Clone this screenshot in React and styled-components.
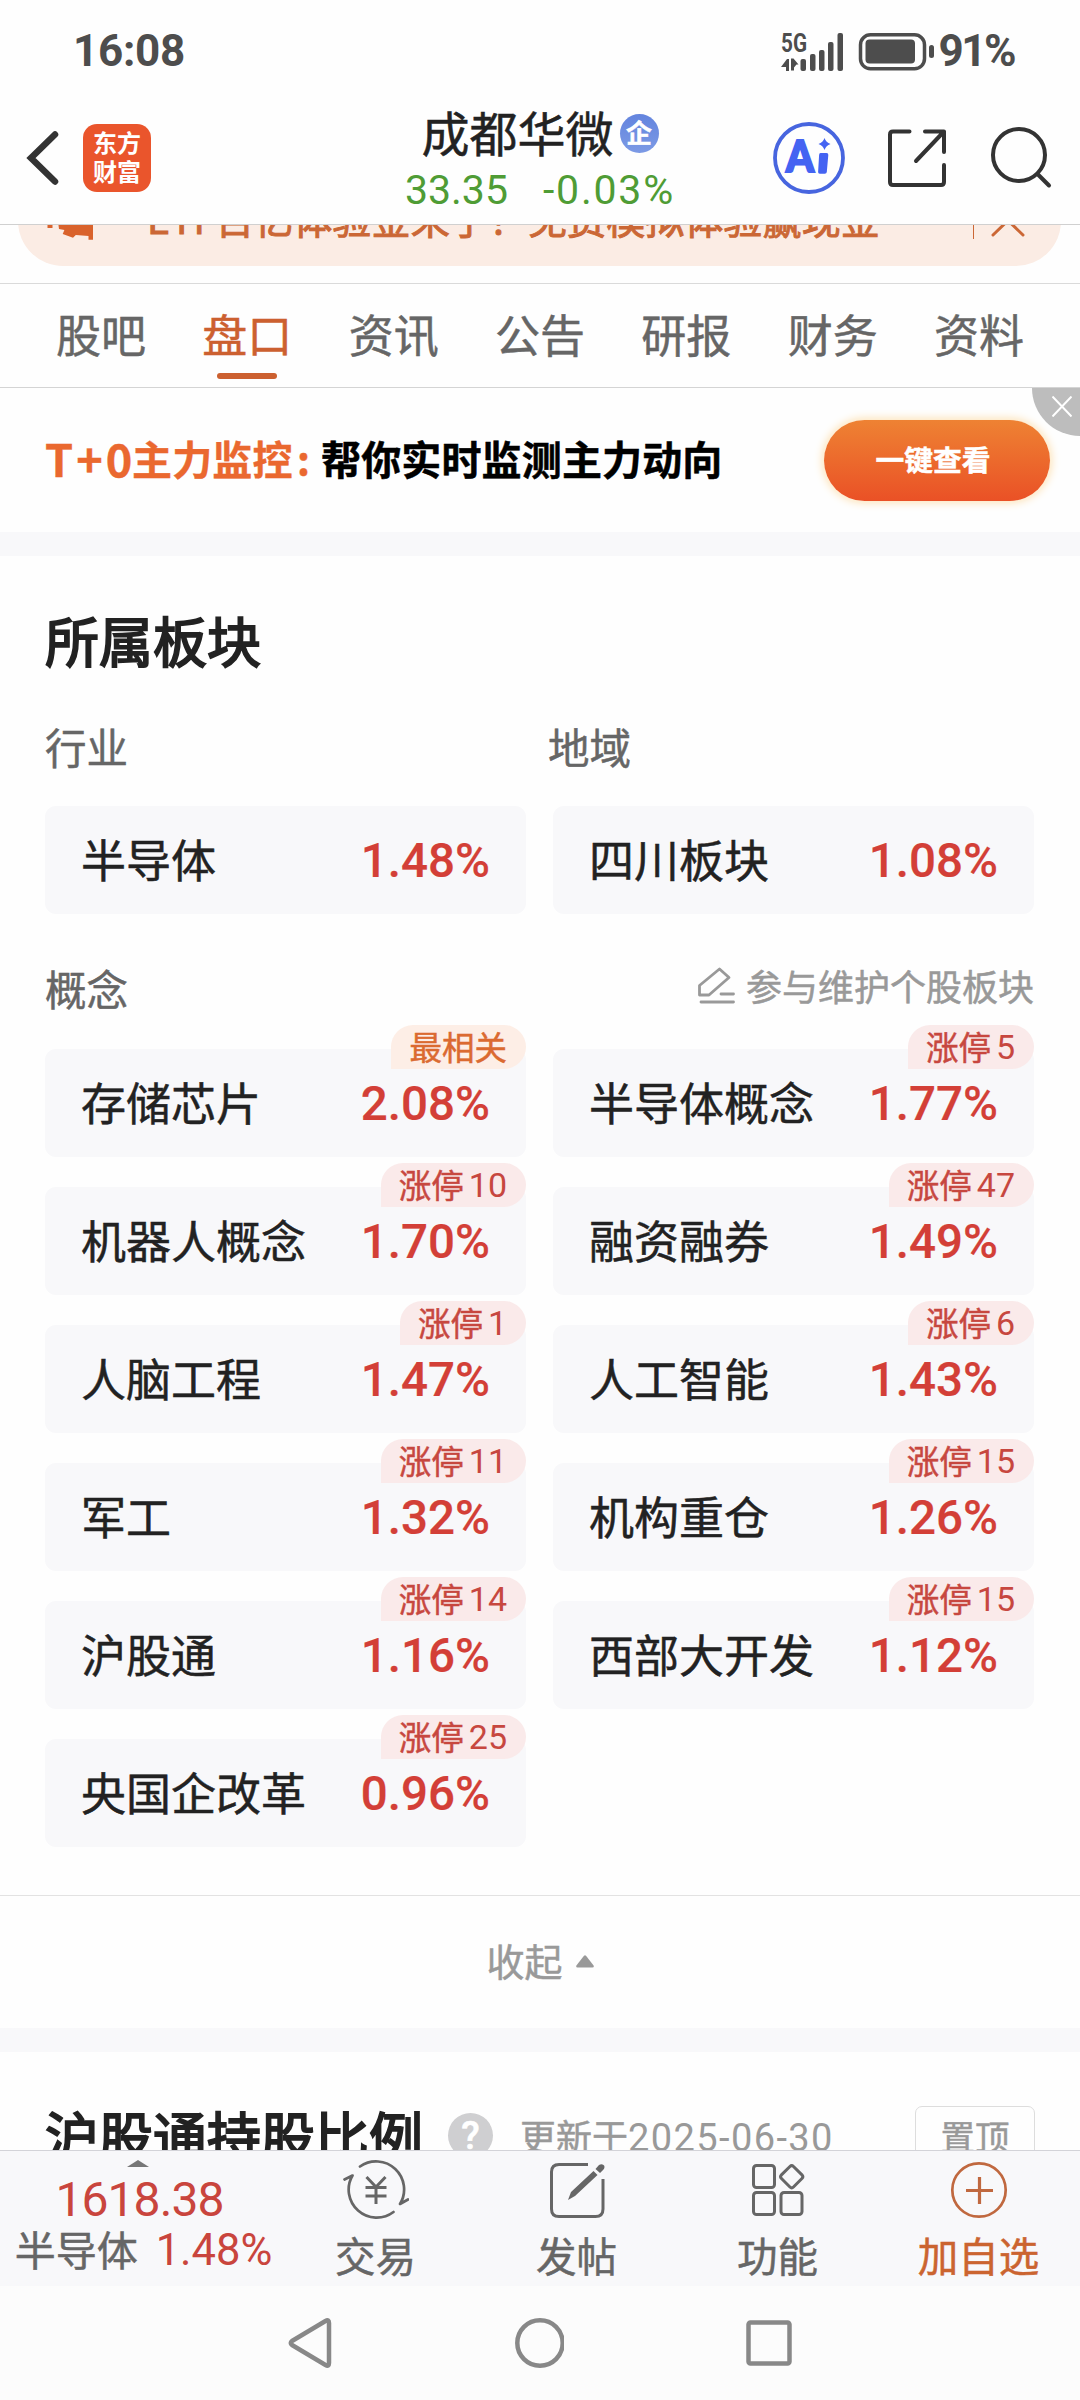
import React from "react";
import styled, { createGlobalStyle } from "styled-components";

const GlobalStyle = createGlobalStyle`
  * {
    box-sizing: border-box;
  }

  body {
    margin: 0;
    background-color: #fefefe;
    font-family: "Noto Sans CJK SC", sans-serif;
    color: #222222;
    -webkit-text-stroke-width: 0.5px;
  }

  svg {
    display: block;
    flex-shrink: 0;
    -webkit-text-stroke-width: 0;
  }
`;

const Screen = styled.div`
  width: 1080px;
  height: 2400px;
  display: flex;
  flex-direction: column;
  overflow: hidden;
  white-space: nowrap;
`;

const Num = styled.span`
  font-family: Roboto, sans-serif;
  font-size: ${({ size }) => size}px;
  font-weight: ${({ weight }) => weight || 400};
  letter-spacing: ${({ spacing }) => spacing || 0}px;
  -webkit-text-stroke-width: 0;
`;

/* ---------- status bar ---------- */

const StatusBar = styled.div`
  height: 102px;
  padding: 0 66px 0 73px;
  display: flex;
  align-items: center;
  justify-content: space-between;
  color: #4d4d4d;
`;

const StatusIcons = styled.div`
  display: flex;
  align-items: center;
  gap: 4px;
`;

/* ---------- app bar ---------- */

const AppBar = styled.div`
  height: 123px;
  display: grid;
  grid-template-columns: 1fr auto 1fr;
  border-bottom: 1px solid #d0d0d0;
`;

const AppBarLeft = styled.div`
  height: 111px;
  padding-left: 24px;
  display: flex;
  align-items: center;
  gap: 21px;
`;

const AppBarRight = styled.div`
  height: 111px;
  padding-right: 28px;
  display: flex;
  align-items: center;
  justify-content: flex-end;
  gap: 41px;
`;

const Logo = styled.div`
  width: 68px;
  height: 68px;
  border-radius: 14px;
  background-color: #ea552c;
  color: #ffffff;
  font-size: 24px;
  font-weight: 700;
  line-height: 29px;
  text-align: center;
  padding-top: 3px;
  -webkit-text-stroke-width: 0;
`;

const Stock = styled.div`
  display: flex;
  flex-direction: column;
  align-items: center;
`;

const StockName = styled.div`
  height: 57px;
  display: flex;
  align-items: center;
  gap: 6px;
  font-size: 48px;
  line-height: 57px;
  padding-top: 1px;
`;

const Verified = styled.span`
  width: 39px;
  height: 39px;
  margin-top: 5px;
  border-radius: 50%;
  background: linear-gradient(#6384de, #7c9ae5);
  color: #ffffff;
  font-size: 26px;
  font-weight: 700;
  line-height: 36px;
  text-align: center;
`;

const StockPrice = styled.div`
  display: flex;
  gap: 35px;
  line-height: 62px;
  color: #4f9c35;
`;

/* ---------- notice ---------- */

const NoticeArea = styled.div`
  height: 58px;
  padding: 0 19px 17px 18px;
  display: flex;
  align-items: flex-end;
  overflow: hidden;
`;

const Notice = styled.div`
  flex: 1;
  height: 90px;
  padding: 0 36px 0 29px;
  display: flex;
  align-items: center;
  border-radius: 45px;
  background-color: #fbece4;
  color: #cb6735;
`;

const NoticeText = styled.div`
  flex: 1;
  margin: -8px 0 0 54px;
  font-size: 39px;
  line-height: 60px;
  letter-spacing: 0.1px;
  -webkit-text-stroke-width: 1px;
`;

const NoticeRule = styled.div`
  width: 1px;
  height: 36px;
  margin-right: 17px;
  background-color: #cb6735;
`;

/* ---------- tabs ---------- */

const Tabs = styled.div`
  height: 105px;
  padding: 0 56px;
  display: flex;
  justify-content: space-between;
  border-top: 1px solid #dadada;
  border-bottom: 1px solid #d4d4d4;
`;

const Tab = styled.div`
  display: flex;
  flex-direction: column;
  align-items: center;
  font-size: 45px;
  line-height: 60px;
  padding-top: 20px;
  color: ${({ $active }) => ($active ? "#cc6030" : "#666666")};

  &::after {
    content: "";
    width: 60px;
    height: 6px;
    margin-top: 9px;
    border-radius: 3px;
    background-color: ${({ $active }) => ($active ? "#cc6030" : "transparent")};
  }
`;

/* ---------- promo ---------- */

const Promo = styled.div`
  position: relative;
  height: 144px;
  padding: 0 30px 0 45px;
  display: flex;
  align-items: center;
  justify-content: space-between;
`;

const PromoText = styled.div`
  display: flex;
  align-items: center;
  height: 60px;
  margin-bottom: 4px;
  font-size: 40px;
  font-weight: 700;
  line-height: 60px;
  letter-spacing: 0.15px;
  color: #000000;
`;

const PromoLead = styled.span`
  display: flex;
  width: 276px;
  color: #ea682f;
  -webkit-text-stroke-width: 0.4px;
`;

const PromoMark = styled.span`
  font-size: 45px;
  letter-spacing: 3px;
  width: 87px;
`;

const PromoColon = styled.span`
  width: 22px;
  text-align: center;
`;

const PromoButton = styled.button`
  width: 226px;
  height: 81px;
  padding: 0 8px 4px 0;
  border: none;
  border-radius: 41px;
  background: linear-gradient(#ee8233, #ea5126);
  box-shadow: 0 0 8px 2px #fde3b8;
  color: #ffffff;
  font-family: inherit;
  font-size: 28.8px;
  font-weight: 700;
`;

const PromoClose = styled.div`
  position: absolute;
  top: 0;
  right: 0;
  width: 48px;
  height: 48px;
  padding: 8px 0 0 20px;
  border-bottom-left-radius: 48px;
  background-color: #bdbdbd;
`;

const Divider = styled.div`
  height: 24px;
  background-color: #f8f8fa;
`;

/* ---------- boards ---------- */

const Section = styled.div`
  height: 1339px;
  padding: 44px 46px 0 45px;
`;

const SectionTitle = styled.div`
  font-size: 54px;
  line-height: 80px;
  -webkit-text-stroke-width: 1.9px;
`;

const Labels = styled.div`
  display: grid;
  grid-template-columns: 503px 1fr;
  margin: 36px 0 30px;
`;

const Label = styled.div`
  font-size: 41.5px;
  line-height: 60px;
  color: #666666;
`;

const ConceptHead = styled.div`
  display: flex;
  align-items: center;
  justify-content: space-between;
  margin: 44px 0 31px;
`;

const Maintain = styled.div`
  display: flex;
  align-items: center;
  gap: 11px;
  margin-top: -5px;
  font-size: 36px;
  line-height: 53px;
  color: #999999;
`;

const CardGrid = styled.div`
  display: grid;
  grid-template-columns: 481px 481px;
  gap: 30px 27px;
`;

const Card = styled.div`
  position: relative;
  height: 108px;
  padding: 0 36px 4px 36px;
  display: flex;
  align-items: center;
  justify-content: space-between;
  border-radius: 11px;
  background-color: #f8f8fa;
  font-size: 45px;
`;

const Percent = styled(Num)`
  color: #d33f37;
  padding-top: 6px;
  -webkit-text-stroke-width: 0.2px;
`;

const Badge = styled.div`
  position: absolute;
  top: -24px;
  right: 0;
  height: 44px;
  padding: 0 19px 0 18px;
  display: flex;
  align-items: center;
  gap: 5px;
  border-radius: 22px 22px 22px 0;
  background-color: ${({ $hot }) => ($hot ? "#fdeee6" : "#faeaea")};
  color: ${({ $hot }) => ($hot ? "#db6a31" : "#c7473f")};
  font-size: 32.5px;
  line-height: 40px;
`;

const BadgeText = styled.span`
  margin-top: -3px;
`;

const Collapse = styled.div`
  height: 133px;
  display: flex;
  align-items: center;
  justify-content: center;
  gap: 13px;
  padding-bottom: 5px;
  border-top: 1px solid #e2e2e2;
  font-size: 38px;
  color: #999999;

  svg {
    margin-top: 3px;
  }
`;

/* ---------- holding ratio ---------- */

const Holding = styled.div`
  height: 98px;
  padding: 54px 45px 0;
  display: flex;
  align-items: flex-start;
  overflow: hidden;
`;

const HoldingTitle = styled(SectionTitle)`
  line-height: 58px;
`;

const Help = styled.div`
  width: 45px;
  height: 45px;
  margin: 7px 27px 0 25px;
  border-radius: 50%;
  background-color: #cfcfd1;
  color: #ffffff;
  font-family: Roboto, sans-serif;
  font-size: 38px;
  font-weight: 500;
  line-height: 46px;
  text-align: center;
`;

const Updated = styled.div`
  flex: 1;
  font-size: 36px;
  line-height: 59px;
  color: #999999;
`;

const PinButton = styled.div`
  width: 120px;
  height: 64px;
  border: 1px solid #dddddd;
  border-radius: 7px;
  text-align: center;
  font-size: 34.5px;
  line-height: 57px;
  color: #999999;
`;

/* ---------- bottom bar ---------- */

const BottomBar = styled.div`
  height: 136px;
  display: grid;
  grid-template-columns: 275px repeat(4, 201px);
  border-top: 1px solid #d3d3d8;
  background-color: #f8f8fa;
`;

const Quote = styled.div`
  display: flex;
  flex-direction: column;
  align-items: center;
  padding-top: 9px;
  color: #c9453d;
`;

const QuoteValue = styled.div`
  line-height: 54px;
  margin-top: 6px;
  padding-left: 4px;
`;

const QuoteBoard = styled.div`
  display: flex;
  align-items: center;
  gap: 18px;
  line-height: 50px;
  margin-top: -10px;
  padding-left: 12px;
`;

const QuoteName = styled.span`
  margin-top: -7px;
  font-size: 41px;
  color: #666666;
`;

const Action = styled.div`
  display: flex;
  flex-direction: column;
  align-items: center;
  padding-top: 8px;
  font-size: 40.5px;
  line-height: 60px;
  color: ${({ $accent }) => ($accent ? "#cb6430" : "#666666")};

  svg {
    margin-bottom: 4px;
  }
`;

const SystemNav = styled.div`
  height: 114px;
  display: flex;
  justify-content: center;
  align-items: center;
  gap: 182px;
  background-color: #fcfcfc;
`;

/* ---------- icons ---------- */

const SignalIcon = () => (
  <svg width="154" height="44" viewBox="781 28 154 44" fill="#4d4d4d">
    <text x="782" y="51" fontFamily="Roboto" fontWeight="700" fontSize="25" textLength="26" lengthAdjust="spacingAndGlyphs">5G</text>
    <path d="M782 66l6-8h2v12h-3v-4zM792 57.500h2.500l5 6h-2l-2.500 3v3h-3z" />
    <rect x="801.500" y="58" width="5.500" height="12" rx="2" />
    <rect x="811" y="53" width="5.500" height="17" rx="2" />
    <rect x="820" y="49" width="5.500" height="21" rx="2" />
    <rect x="829" y="41" width="5.500" height="29" rx="2" />
    <rect x="838.500" y="32" width="5.500" height="38" rx="2" />
    <rect x="861.500" y="33.800" width="64" height="34" rx="10" fill="none" stroke="#4d4d4d" strokeWidth="3.500" />
    <rect x="866.500" y="38.500" width="49.500" height="24" rx="4" />
    <rect x="930" y="44" width="5" height="13" rx="2.500" />
  </svg>
);

const BackIcon = () => (
  <svg width="38" height="60" viewBox="0 0 38 60" fill="none" stroke="#333" strokeWidth="6.500" strokeLinecap="round">
    <path d="M31 6.500L7 30l24 23.500" />
  </svg>
);

const AiIcon = () => (
  <svg width="74" height="74" viewBox="0 0 74 74" fill="#4463f2">
    <circle cx="37" cy="37" r="34" fill="none" stroke="#4765df" strokeWidth="3.800" />
    <text x="14" y="50.500" fontFamily="Lato" fontWeight="900" fontSize="43" textLength="28" lengthAdjust="spacingAndGlyphs" stroke="#4463f2" strokeWidth="2">A</text>
    <path d="M48.500 32h6q2 0 1.800 2l-1.500 17q-.2 1.800-2 1.800h-5q-1.800 0-1.700-1.800l1-17q.1-2 1.400-2z" />
    <path d="M52.500 17q1.500 4.500 6 6-4.500 1.500-6 6-1.500-4.500-6-6 4.500-1.500 6-6z" />
  </svg>
);

const ShareIcon = () => (
  <svg width="60" height="60" viewBox="0 0 60 60" fill="none" stroke="#333" strokeWidth="4" strokeLinecap="round" strokeLinejoin="round">
    <path d="M22.500 3.500H6q-3 0-3 3V54q0 3 3 3h48q3 0 3-3V37" />
    <path d="M38 3.500h19V24M57 3.500L29 33" />
  </svg>
);

const SearchIcon = () => (
  <svg width="64" height="64" viewBox="0 0 64 64" fill="none" stroke="#333" strokeWidth="4" strokeLinecap="round">
    <circle cx="31" cy="29" r="26" />
    <path d="M49.500 48L61 59.500" />
  </svg>
);

const SpeakerIcon = () => (
  <svg width="46" height="38" viewBox="47 202 46 38" fill="#d9622b">
    <path d="M57 214l36-12v37.700h-4.500V236l-12.700-1-2.800 2.700-10.300-3.700 1.700-4-5.400-1z" />
    <rect x="47.500" y="214" width="5" height="14" />
  </svg>
);

const NoticeCloseIcon = () => (
  <svg width="34" height="34" viewBox="0 0 34 34" stroke="#cb6735" strokeWidth="3" strokeLinecap="round">
    <path d="M2 2l30 29M32 2L2 31" />
  </svg>
);

const PromoCloseIcon = () => (
  <svg width="20" height="21" viewBox="0 0 20 21" stroke="#fff" strokeWidth="2">
    <path d="M.5 .5l19 20M19.500 .5l-19 20" />
  </svg>
);

const EditIcon = () => (
  <svg width="37" height="38" viewBox="0 0 37 38" fill="none" stroke="#999" strokeWidth="2.800" strokeLinecap="round" strokeLinejoin="round">
    <path d="M1.500 18.500L21.500 2l9.500 8.500L11 28H1.500zM23 27h12.500M3 35h32.500" />
  </svg>
);

const CollapseIcon = () => (
  <svg width="18" height="13" viewBox="0 0 18 13" fill="#999">
    <path d="M8 .7q1-1 2 0l7.600 9.800q.8 2-1.200 2H1.600q-2 0-1.200-2z" />
  </svg>
);

const QuoteArrow = () => (
  <svg width="22" height="7" viewBox="0 0 22 7" fill="#777">
    <path d="M11 0l11 7H0z" />
  </svg>
);

const TradeIcon = () => (
  <svg width="66" height="62" viewBox="0 0 66 62" fill="none" stroke="#666" strokeWidth="2.700" strokeLinecap="round" strokeLinejoin="round">
    <path d="M17 7.500A28 28 0 0 1 57 45L65 40.500" />
    <path d="M50.500 53A28 28 0 0 1 9.500 16.500L1.500 20.500" />
    <path d="M23.500 18L33 28l9.500-10M33 28v17M22.500 28.500h21M22.500 37h21" strokeWidth="3" strokeLinecap="butt" />
  </svg>
);

const PostIcon = () => (
  <svg width="56" height="62" viewBox="0 0 56 62" fill="none" stroke="#666" strokeWidth="3">
    <path d="M39 5.500H10q-7.500 0-7.500 7.500v37q0 7.500 7.500 7.500h36.500q7.500 0 7.500-7.500V20" />
    <path d="M19 41l3-8L44.500 12l4 4L26 37zM46.500 10l3.500-4q2.500-1.500 4.500 0t0 4.500L51 14z" fill="#666" stroke="none" />
  </svg>
);

const FunctionIcon = () => (
  <svg width="54" height="62" viewBox="0 0 54 62" fill="none" stroke="#666" strokeWidth="3" strokeLinejoin="round">
    <rect x="2.500" y="6.500" width="21" height="22" rx="3" />
    <rect x="2.500" y="33.500" width="21" height="22" rx="3" />
    <rect x="30" y="33.500" width="21" height="22" rx="3" />
    <rect x="32.200" y="9.200" width="17" height="17" rx="2.500" transform="rotate(45 40.700 17.700)" />
  </svg>
);

const AddIcon = () => (
  <svg width="58" height="62" viewBox="0 0 58 62" fill="none" stroke="#c0683f" strokeWidth="2.700">
    <circle cx="29" cy="31" r="26.700" />
    <path d="M29.500 18v27M16 31.500h27" strokeWidth="3.200" />
  </svg>
);

const NavBackIcon = () => (
  <svg width="44" height="52" viewBox="0 0 44 52" fill="none" stroke="#888" strokeWidth="4.500" strokeLinejoin="round">
    <path d="M37.500 4Q41 2 41 6v40q0 4-3.500 2L4 28q-2.500-2 0-4z" />
  </svg>
);

const NavHomeIcon = () => (
  <svg width="50" height="52" viewBox="0 0 50 52" fill="none" stroke="#888" strokeWidth="4.500">
    <circle cx="26" cy="26" r="22.700" />
  </svg>
);

const NavRecentIcon = () => (
  <svg width="46" height="46" viewBox="0 0 46 46" fill="none" stroke="#888" strokeWidth="4.500">
    <rect x="2.500" y="2.500" width="41" height="41" rx="2" />
  </svg>
);

/* ---------- data ---------- */

const tabs = ["股吧", "盘口", "资讯", "公告", "研报", "财务", "资料"];

const basics = [
  { name: "半导体", percent: "1.48%" },
  { name: "四川板块", percent: "1.08%" },
];

const concepts = [
  { name: "存储芯片", percent: "2.08%", hot: true },
  { name: "半导体概念", percent: "1.77%", limit: 5 },
  { name: "机器人概念", percent: "1.70%", limit: 10 },
  { name: "融资融券", percent: "1.49%", limit: 47 },
  { name: "人脑工程", percent: "1.47%", limit: 1 },
  { name: "人工智能", percent: "1.43%", limit: 6 },
  { name: "军工", percent: "1.32%", limit: 11 },
  { name: "机构重仓", percent: "1.26%", limit: 15 },
  { name: "沪股通", percent: "1.16%", limit: 14 },
  { name: "西部大开发", percent: "1.12%", limit: 15 },
  { name: "央国企改革", percent: "0.96%", limit: 25 },
];

const BoardCard = ({ name, percent, hot, limit }) => (
  <Card>
    <span>{name}</span>
    <Percent size={47.5} weight={500}>{percent}</Percent>
    {hot && (
      <Badge $hot>
        <BadgeText>最相关</BadgeText>
      </Badge>
    )}
    {limit && (
      <Badge>
        <BadgeText>涨停</BadgeText>
        <Num size={34}>{limit}</Num>
      </Badge>
    )}
  </Card>
);

export default function App() {
  return (
    <Screen>
      <GlobalStyle />
      <StatusBar>
        <Num size={44} weight={700} spacing={-0.3}>16:08</Num>
        <StatusIcons>
          <SignalIcon />
          <Num size={44} weight={700} spacing={-2.5}>91%</Num>
        </StatusIcons>
      </StatusBar>

      <AppBar>
        <AppBarLeft>
          <BackIcon />
          <Logo>
            东方
            <br />
            财富
          </Logo>
        </AppBarLeft>
        <Stock>
          <StockName>
            成都华微
            <Verified>企</Verified>
          </StockName>
          <StockPrice>
            <Num size={41}>33.35</Num>
            <Num size={41} spacing={1.8}>-0.03%</Num>
          </StockPrice>
        </Stock>
        <AppBarRight>
          <AiIcon />
          <ShareIcon />
          <SearchIcon />
        </AppBarRight>
      </AppBar>

      <NoticeArea>
        <Notice>
          <SpeakerIcon />
          <NoticeText>ETF百亿体验金来了！免费模拟体验赢现金</NoticeText>
          <NoticeRule />
          <NoticeCloseIcon />
        </Notice>
      </NoticeArea>

      <Tabs>
        {tabs.map((tab) => (
          <Tab key={tab} $active={tab === "盘口"}>{tab}</Tab>
        ))}
      </Tabs>

      <Promo>
        <PromoText>
          <PromoLead>
            <PromoMark>T+0</PromoMark>
            主力监控
            <PromoColon>:</PromoColon>
          </PromoLead>
          帮你实时监测主力动向
        </PromoText>
        <PromoButton>一键查看</PromoButton>
        <PromoClose>
          <PromoCloseIcon />
        </PromoClose>
      </Promo>

      <Divider />

      <Section>
        <SectionTitle>所属板块</SectionTitle>
        <Labels>
          <Label>行业</Label>
          <Label>地域</Label>
        </Labels>
        <CardGrid>
          {basics.map((item) => (
            <BoardCard key={item.name} {...item} />
          ))}
        </CardGrid>
        <ConceptHead>
          <Label>概念</Label>
          <Maintain>
            <EditIcon />
            参与维护个股板块
          </Maintain>
        </ConceptHead>
        <CardGrid>
          {concepts.map((item) => (
            <BoardCard key={item.name} {...item} />
          ))}
        </CardGrid>
      </Section>

      <Collapse>
        收起
        <CollapseIcon />
      </Collapse>

      <Divider />

      <Holding>
        <HoldingTitle>沪股通持股比例</HoldingTitle>
        <Help>?</Help>
        <Updated>
          更新于<Num size={38} spacing={1.4}>2025-06-30</Num>
        </Updated>
        <PinButton>置顶</PinButton>
      </Holding>

      <BottomBar>
        <Quote>
          <QuoteArrow />
          <QuoteValue>
            <Num size={48} spacing={-0.9}>1618.38</Num>
          </QuoteValue>
          <QuoteBoard>
            <QuoteName>半导体</QuoteName>
            <Num size={43.5}>1.48%</Num>
          </QuoteBoard>
        </Quote>
        <Action>
          <TradeIcon />
          交易
        </Action>
        <Action>
          <PostIcon />
          发帖
        </Action>
        <Action>
          <FunctionIcon />
          功能
        </Action>
        <Action $accent>
          <AddIcon />
          加自选
        </Action>
      </BottomBar>

      <SystemNav>
        <NavBackIcon />
        <NavHomeIcon />
        <NavRecentIcon />
      </SystemNav>
    </Screen>
  );
}
